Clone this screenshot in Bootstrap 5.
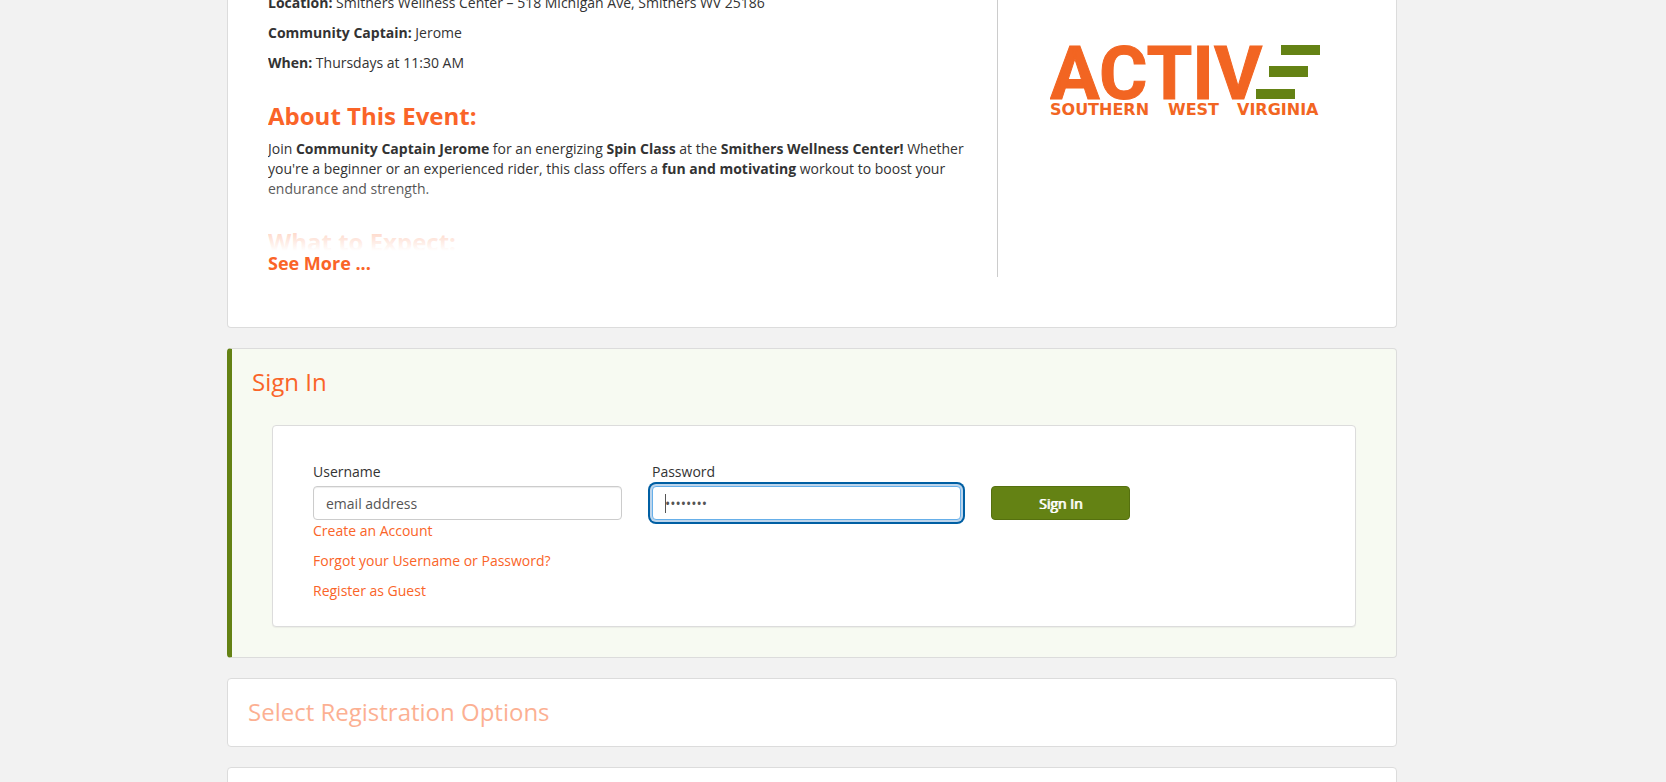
<!DOCTYPE html>
<html lang="en">
<head>
<meta charset="utf-8">
<meta name="viewport" content="width=device-width, initial-scale=1">
<title>Spin Class – Active Southern West Virginia</title>
<link href="https://cdn.jsdelivr.net/npm/bootstrap@5.3.0/dist/css/bootstrap.min.css" rel="stylesheet">
<style>
  :root { --brand: #fa6428; --leaf: #648214; --edge: #dcdcdc; }
  body { background: #f2f2f2; color: #333; font-family: "Open Sans", sans-serif; font-size: 14px; line-height: 20px; }
  a { color: var(--brand); text-decoration: none; }
  .page-wrap { padding-right: 42px; height: 100vh; overflow: hidden; }
  .page-col { max-width: 1170px; gap: 20px; }
  .panel-box { background: #fff; border: 1px solid var(--edge); border-radius: 4px; }
  .panel-title { color: var(--brand); font-size: 24px; line-height: 26px; font-weight: 400; margin: 0; }
  .intro { border-top: 0; border-radius: 0 0 4px 4px; padding: 0 40px 50px; }
  .intro-text { flex: 1 1 729px; border-right: 1px solid #ccc; padding-right: 29px; }
  .intro-logo { flex: 0 1 358px; padding: 42px 34px 0 52px; }
  .intro-logo svg { width: 100%; }
  .teaser { position: relative; height: 251px; overflow: hidden; }
  .teaser::after { content: ""; position: absolute; inset: auto 0 0; height: 75px; background: linear-gradient(rgba(255,255,255,0), #fff); }
  .teaser-body { margin-top: -7px; }
  .teaser p { margin: 0 0 10px; }
  .teaser h2 { color: var(--brand); font-size: 24px; line-height: 27px; font-weight: 700; margin: 29px 0 10px; }
  .see-more { display: block; font-size: 18px; line-height: 24px; font-weight: 700; padding-bottom: 2px; }
  .signin { background: #f7faf2; border-left: 5px solid var(--leaf); padding: 20px 40px 30px 20px; }
  .signin-form { margin: 30px 0 0 20px; padding: 36px 55px 25px 40px; box-shadow: 0 1px 1px rgba(0,0,0,.05); }
  .signin-form .row { --bs-gutter-x: 30px; }
  .signin-form label { margin-bottom: 4px; display: block; }
  .signin-form .form-control { height: 34px; padding: 6px 12px; font-size: 14px; line-height: 20px; border: 1px solid #ccc; border-radius: 4px; box-shadow: inset 0 1px 1px rgba(0,0,0,.075); color: #555; }
  .signin-form .form-control::placeholder { color: #555; }
  .signin-form .is-current { border-color: #66afe9; box-shadow: 0 0 0 2px #bdd5ec, 0 0 0 4px #005fa3; background: linear-gradient(#555,#555) 12px 7px / 1px 19px no-repeat #fff; }
  .btn-signin { --bs-btn-color: #fff; --bs-btn-bg: var(--leaf); --bs-btn-border-color: #55700f; --bs-btn-hover-color: #fff; --bs-btn-hover-bg: #55700f; --bs-btn-border-radius: 4px; width: 139px; height: 34px; margin-top: 24px; padding: 7px 12px 5px; font-size: 14px; line-height: 20px; text-shadow: 1px 0 #fff; }
  .help-links { margin-top: 1px; }
  .help-links li + li { margin-top: 10px; }
  .step { padding: 20px 20px 21px; }
</style>
</head>
<body>
<div class="page-wrap">
  <main class="page-col mx-auto d-flex flex-column">

    <section class="panel-box intro d-flex">
      <div class="intro-text">
        <div class="teaser">
          <div class="teaser-body">
            <p><strong>Location:</strong> Smithers Wellness Center – 518 Michigan Ave, Smithers WV 25186</p>
            <p><strong>Community Captain:</strong> Jerome</p>
            <p><strong>When:</strong> Thursdays at 11:30 AM</p>
            <h2>About This Event:</h2>
            <p>Join <strong>Community Captain Jerome</strong> for an energizing <strong>Spin Class</strong> at the <strong>Smithers Wellness Center!</strong> Whether you're a beginner or an experienced rider, this class offers a <strong>fun and motivating</strong> workout to boost your endurance and strength.</p>
            <h2>What to Expect:</h2>
          </div>
        </div>
        <a href="#" class="see-more">See More ...</a>
      </div>
      <div class="intro-logo">
        <svg viewBox="0 0 272 76" role="img" aria-label="Active Southern West Virginia">
          <g fill="#f26522" font-weight="700">
            <text x="0" y="57" font-family="Roboto, sans-serif" font-size="74" stroke="#f26522">ACTIV</text>
            <g font-family="'DejaVu Sans', sans-serif" font-size="16">
              <text x="0" y="73">SOUTHERN</text>
              <text x="118" y="73">WEST</text>
              <text x="187" y="73">VIRGINIA</text>
            </g>
          </g>
          <g fill="#648214">
            <path d="M231 3h39v10h-39z"/>
            <path d="M219 24h39v11h-39z"/>
            <path d="M206 47h39v10h-39z"/>
          </g>
        </svg>
      </div>
    </section>

    <section class="panel-box signin">
      <h2 class="panel-title">Sign In</h2>
      <form class="panel-box signin-form">
        <div class="row">
          <div class="col-4">
            <label for="username">Username</label>
            <input type="text" id="username" class="form-control" placeholder="email address">
          </div>
          <div class="col-4">
            <label for="password">Password</label>
            <input type="password" id="password" class="form-control is-current" placeholder="••••••••">
          </div>
          <div class="col-4">
            <button type="button" class="btn btn-signin">Sign In</button>
          </div>
          <div class="col-12">
            <ul class="list-unstyled help-links mb-0">
              <li><a href="#">Create an Account</a></li>
              <li><a href="#">Forgot your Username or Password?</a></li>
              <li><a href="#">Register as Guest</a></li>
            </ul>
          </div>
        </div>
      </form>
    </section>

    <section class="panel-box step">
      <h2 class="panel-title opacity-50">Select Registration Options</h2>
    </section>

    <section class="panel-box step">
      <h2 class="panel-title opacity-50">&nbsp;</h2>
    </section>
  </main>
</div>
<script src="https://cdn.jsdelivr.net/npm/bootstrap@5.3.0/dist/js/bootstrap.bundle.min.js"></script>
</body>
</html>
